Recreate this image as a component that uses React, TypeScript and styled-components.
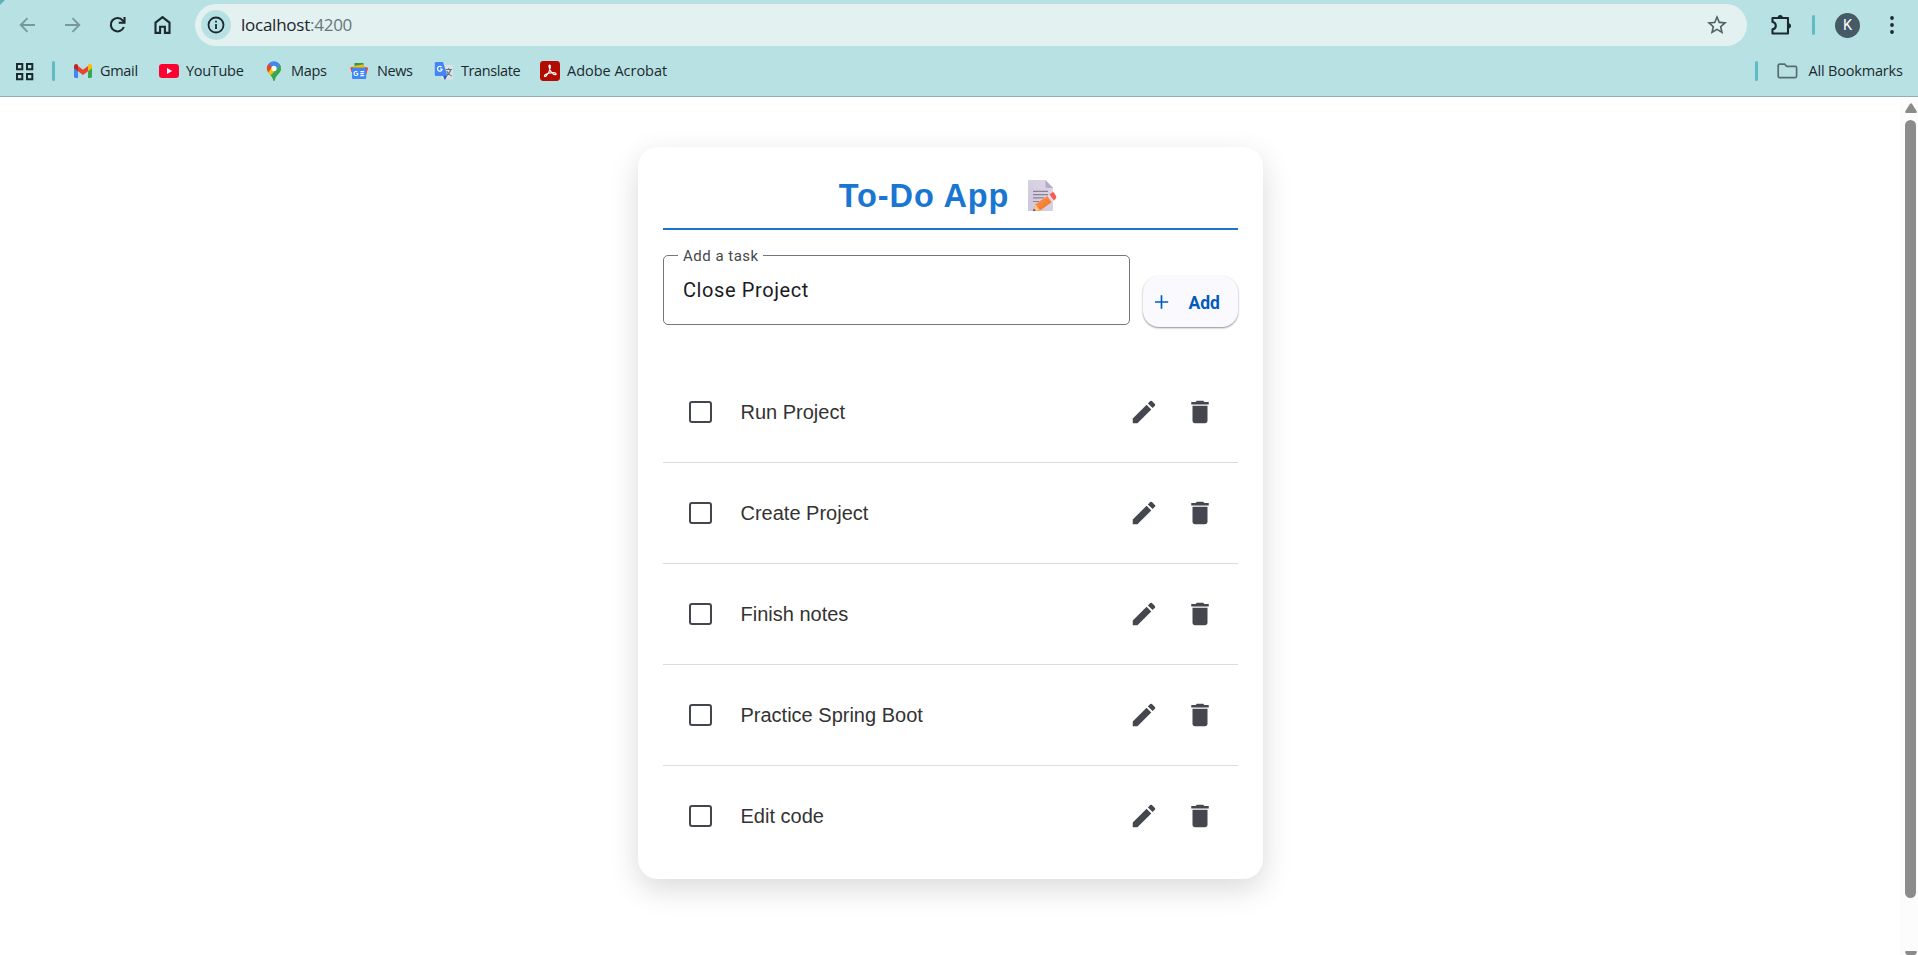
import React from 'react';
import styled, { createGlobalStyle } from 'styled-components';

const GlobalStyle = createGlobalStyle`
  * { box-sizing: border-box; }
  html, body { margin: 0; height: 100%; overflow: hidden; background: #fff; }
  #root { height: 100vh; }
  button, input { font: inherit; border: 0; padding: 0; margin: 0; background: none; outline: 0; }
  svg { display: block; flex: none; }
`;

const Window = styled.div`
  display: flex;
  flex-direction: column;
  height: 100vh;
`;

const Chrome = styled.header`
  flex: none;
  height: 97px;
  background: linear-gradient(135deg, #5fb0b6 3px, #b8e1e4 4px);
  border-bottom: 1px solid #92aeb0;
  font-family: 'Open Sans', 'Noto Sans', sans-serif;
  color: #1b2a2e;
`;

const Toolbar = styled.div`
  display: flex;
  align-items: center;
  height: 50px;
  padding: 0 24px 0 15px;
`;

const NavButton = styled.button<{ $dim?: boolean }>`
  display: flex;
  align-items: center;
  justify-content: center;
  width: 25px;
  height: 25px;
  margin-right: 20px;
  color: ${(p) => (p.$dim ? '#77989c' : '#1b2a2e')};
`;

const AddressBar = styled.div`
  display: flex;
  align-items: center;
  flex: none;
  width: 1552px;
  height: 42px;
  padding: 0 20px 0 6px;
  border-radius: 21px;
  background: #e4f1f1;
`;

const SiteInfo = styled.div`
  display: flex;
  align-items: center;
  justify-content: center;
  width: 30px;
  height: 30px;
  border-radius: 50%;
  background: #b8e1e4;
`;

const Url = styled.div`
  flex: 1;
  margin-left: 10px;
  font-size: 17px;
  line-height: 24px;
  letter-spacing: -0.25px;
  color: #1d2629;
  span { color: #65777b; }
`;

const ToolbarEnd = styled.div`
  display: flex;
  align-items: center;
  flex: 1;
  padding-left: 23px;
`;

const Bar = styled.i<{ $h: number; $ml?: number; $mr?: number }>`
  flex: none;
  width: 3px;
  height: ${(p) => p.$h}px;
  margin-left: ${(p) => p.$ml ?? 0}px;
  margin-right: ${(p) => p.$mr ?? 0}px;
  border-radius: 2px;
  background: #5fbcc3;
`;

const Avatar = styled.div`
  display: flex;
  align-items: center;
  justify-content: center;
  flex: none;
  width: 25px;
  height: 25px;
  border-radius: 50%;
  background: #455a64;
  color: #fff;
  font: 400 14.5px Roboto, sans-serif;
`;

const Bookmarks = styled.nav`
  display: flex;
  align-items: center;
  height: 42px;
  padding-left: 15px;
`;

const Bookmark = styled.a<{ $w: number; $track?: number }>`
  display: flex;
  align-items: center;
  gap: 7px;
  width: ${(p) => p.$w}px;
  font-size: 14.5px;
  line-height: 20px;
  letter-spacing: ${(p) => p.$track ?? -0.3}px;
  white-space: nowrap;
`;

const Spacer = styled.div`
  flex: 1;
`;

const Viewport = styled.div`
  display: flex;
  flex: 1;
  min-height: 0;
`;

const Page = styled.main`
  flex: 1;
  padding-top: 50px;
`;

const Card = styled.section`
  width: 625px;
  height: 732px;
  margin: 0 auto;
  padding: 25px;
  border-radius: 20px;
  background: #fff;
  box-shadow: 0 10px 30px rgba(0, 0, 0, 0.15);
`;

const Title = styled.h1`
  display: flex;
  align-items: center;
  justify-content: center;
  height: 58px;
  margin: 0;
  padding: 0 3px 9px 0;
  border-bottom: 2px solid #1f74c9;
  font: 700 32.5px/38px 'Liberation Sans', Arial, sans-serif;
  letter-spacing: 0.9px;
  color: #1976d2;
  svg { margin-left: 19px; }
`;

const Form = styled.div`
  display: flex;
  gap: 13px;
  margin-top: 25px;
`;

const Field = styled.fieldset`
  width: 467px;
  height: 78px;
  margin: -8px 0 0;
  padding: 0 19px;
  border: 1px solid #74777f;
  border-radius: 5px;
  font-family: Roboto, sans-serif;
`;

const FieldLabel = styled.legend`
  height: 17px;
  margin-left: -5px;
  padding: 0 4.5px 0 5.5px;
  font-size: 15px;
  line-height: 19px;
  letter-spacing: 0.5px;
  color: #44474e;
`;

const FieldInput = styled.input`
  display: block;
  width: 100%;
  height: 30px;
  margin-top: 11px;
  padding-left: 0.5px;
  font-size: 20px;
  letter-spacing: 0.6px;
  color: #1a1b1f;
`;

const AddButton = styled.button`
  display: flex;
  align-items: center;
  width: 95px;
  height: 51px;
  margin-top: 21px;
  padding-left: 12px;
  border-radius: 16px;
  background: #faf9fd;
  box-shadow: 0 1px 2px rgba(0, 0, 0, 0.45);
  color: #005cbb;
  font: 700 17.5px Roboto, sans-serif;
  span { margin: 2px 0 0 20px; }
`;

const List = styled.ul`
  margin: 35px 0 0;
  padding: 0;
  list-style: none;
`;

const Row = styled.li`
  display: flex;
  align-items: center;
  height: 101px;
  padding: 0 23px 0 26px;
  border-bottom: 1px solid #dcdcdc;
  color: #44474e;
  &:last-child { border-bottom-color: transparent; }
`;

const Checkbox = styled.span`
  width: 23px;
  height: 22px;
  margin-right: 29px;
  border: 2px solid #44464d;
  border-radius: 3px;
`;

const TaskName = styled.span`
  flex: 1;
  font: 20px/28px 'Liberation Sans', Arial, sans-serif;
  color: #333;
`;

const Actions = styled.div`
  display: flex;
  gap: 26px;
`;

const ScrollTrack = styled.div`
  display: flex;
  flex-direction: column;
  align-items: center;
  width: 18px;
  padding: 6px 0 0 3px;
  background: #fcfcfc;
  overflow: hidden;
`;

const ScrollThumb = styled.div`
  flex: none;
  width: 11px;
  height: 778px;
  margin: 7px 0 53px;
  border-radius: 6px;
  background: #8b8b8b;
`;

const ArrowLeft = ({ flip }: { flip?: boolean }) => (
  <svg width="17" height="16" viewBox="0 0 17 16" fill="none" stroke="currentColor" strokeWidth="1.9">
    <path d={flip ? 'M1 8H15M8.5 1.2L15.3 8L8.5 14.8' : 'M16 8H2M8.5 1.2L1.7 8L8.5 14.8'} />
  </svg>
);

const Reload = () => (
  <svg width="18" height="18" viewBox="0.5 0 18 18" fill="none" stroke="currentColor" strokeWidth="2.1">
    <path d="M15.3 11A6.7 6.7 0 1 1 14.3 4.6L15.8 6.5" />
    <path d="M16 1V6.7H10.2" />
  </svg>
);

const Home = () => (
  <svg width="18" height="20" viewBox="0.5 0 18 20" fill="none" stroke="currentColor" strokeWidth="2.1">
    <path d="M2 7.6L9 2.2L16 7.6V17.9H11.4V11.8H6.6V17.9H2Z" />
  </svg>
);

const Info = () => (
  <svg width="18" height="18" viewBox="0 0 18 18" fill="none" stroke="#1b2a2e" strokeWidth="1.8">
    <circle cx="9" cy="9" r="7.5" />
    <path d="M9 8V13M9 4.8V6.6" />
  </svg>
);

const Star = () => (
  <svg width="20" height="20" viewBox="2 2 20 20" fill="#4f6164">
    <path d="M22 9.24l-7.19-.62L12 2 9.19 8.63 2 9.24l5.46 4.73L5.82 21 12 17.27 18.18 21l-1.63-7.03L22 9.24zM12 15.4l-3.76 2.27 1-4.28-3.32-2.88 4.38-.38L12 6.1l1.71 4.04 4.38.38-3.32 2.88 1 4.28L12 15.4z" />
  </svg>
);

const Extension = () => (
  <svg width="22" height="22" viewBox="0 0 22 22" fill="none" stroke="#1b2a2e" strokeWidth="2.1" strokeLinejoin="round">
    <path d="M2.5 4H18V19.5H2.5V15.4C4.7 15 5.8 13.6 5.8 11.7S4.7 8.3 2.5 8Z" />
    <path d="M7.6 3.6a2.6 2.6 0 0 1 5.2 0ZM18.4 9.2a2.6 2.6 0 0 1 0 5.2Z" fill="#1b2a2e" stroke="none" />
  </svg>
);

const Dots = () => (
  <svg width="4" height="18" viewBox="0 0 4 18" fill="#1b2a2e">
    <circle cx="2" cy="2" r="1.9" />
    <circle cx="2" cy="9" r="1.9" />
    <circle cx="2" cy="16" r="1.9" />
  </svg>
);

const Apps = () => (
  <svg width="19" height="19" viewBox="0 0 19 19" fill="none" stroke="#1b2a2e" strokeWidth="2">
    <path d="M2 2H7.3V7.3H2ZM12 2H17.3V7.3H12ZM2 12H7.3V17.3H2ZM12 12H17.3V17.3H12Z" />
  </svg>
);

const Gmail = () => (
  <svg width="20" height="16" viewBox="0 0 20 16">
    <path d="M1 3V13.6Q1 15 2.4 15H5V6Z" fill="#4285f4" />
    <path d="M15 6V15H17.6Q19 15 19 13.6V3Z" fill="#34a853" />
    <path d="M5 3V8.2L10 12L15 8.2V3L10 6.8Z" fill="#ea4335" />
    <path d="M1 3.4Q1 1 3 1Q3.8 1 5 2.1V8.2L1 5.2Z" fill="#c5221f" />
    <path d="M19 3.4Q19 1 17 1Q16.2 1 15 2.1V8.2L19 5.2Z" fill="#fbbc04" />
  </svg>
);

const YouTube = () => (
  <svg width="20" height="14" viewBox="0 0 20 14">
    <rect width="20" height="14" rx="3.2" fill="#ff0033" />
    <path d="M8 4L13.2 7L8 10Z" fill="#fff" />
  </svg>
);

const Maps = () => (
  <svg width="20" height="20" viewBox="0 0 20 20">
    <path d="M3 7.5A7 7 0 0 1 17 7.5C17 12.5 11.5 13.5 10.7 19.2Q10 20.4 9.3 19.2C8.7 14 3 12.3 3 7.5Z" fill="#34a853" />
    <path d="M4.3 11.5L12.4 2.2L16.6 6C17 7.2 16.9 8 16.6 8.6L10 10.2L6.6 14.3Z" fill="#fbbc04" />
    <path d="M4.7 2.8L8.5 6L4.2 11.3A7 7 0 0 1 4.7 2.8Z" fill="#ea4335" />
    <path d="M4.7 2.8A7 7 0 0 1 16.2 4.2L11.7 9L8.4 6Z" fill="#4285f4" />
    <path d="M16.2 4.2Q18.2 9 14.7 12.5Q11.5 15.5 10.7 19.2Q10 20.4 9.3 19.2Q8.7 16.4 6.6 14.3Z" fill="#34a853" />
    <path d="M4.2 11.3L8 7L12 9L6.6 14.3Z" fill="#fbbc04" />
    <circle cx="10" cy="7.4" r="2.6" fill="#fff" />
  </svg>
);

const News = () => (
  <svg width="20" height="20" viewBox="0 0 20 20">
    <path d="M4.5 2H13.5V9H4.5Z" fill="#2b9a4b" />
    <path d="M.3 6.6L4 5.6V11H1.5Z" fill="#ea4335" />
    <path d="M13.5 5.4L18.2 6.8L16 14.5H13.5Z" fill="#ea4335" />
    <path d="M2.6 5.2L12.6 3.4L15.2 6.5V9H3Z" fill="#fbbc04" />
    <rect x="2" y="6.6" width="14.2" height="11.4" rx="1" fill="#4285f4" />
    <path d="M8.1 12.5H6.4M8 12.5A2 2 0 1 1 7.3 11M10.4 10.6H14.2M10.4 12.6H13.8M10.4 14.6H14.2" fill="none" stroke="#fff" strokeWidth="1.1" />
  </svg>
);

const Translate = () => (
  <svg width="20" height="20" viewBox="0 0 20 20">
    <rect x="7" y="4" width="12" height="14.5" rx="1.2" fill="#dde1e4" />
    <path d="M11.5 8.5H18M14.7 7V8.5M16.8 8.5Q15.5 13 11.8 15M12.7 10Q14 13.5 17.7 15" fill="none" stroke="#67777c" strokeWidth="1.1" />
    <path d="M9 14.5H13.3L10.8 19.2Z" fill="#2a56c6" />
    <path d="M2 1H9L13.5 15H2Q.8 15 .8 13.8V2.2Q.8 1 2 1Z" fill="#4285f4" />
    <path d="M8.4 8H6M8.3 8A2.4 2.4 0 1 1 7.5 6" fill="none" stroke="#fff" strokeWidth="1.2" />
  </svg>
);

const Acrobat = () => (
  <svg width="20" height="20" viewBox="0 0 20 20">
    <rect width="20" height="20" rx="3.4" fill="#b30b00" />
    <path d="M9.6 4C8.6 4 9 7 10.2 9.2C11.5 11.8 13.8 13.7 15.2 13.7C16.9 13.7 16.2 11.7 13 11.7C10.1 11.7 6.9 12.6 5.2 13.8C3.6 15 4.9 16.4 6.3 14.9C8 13 10 9 10.3 6.3C10.4 4.6 10.1 4 9.6 4Z" fill="none" stroke="#fff" strokeWidth="1.2" />
  </svg>
);

const Folder = () => (
  <svg width="21" height="16" viewBox="0 0 21 16" fill="none" stroke="#596d70" strokeWidth="1.7">
    <path d="M1.2 2.6Q1.2 1.2 2.6 1.2H7.6L9.8 3.4H18.3Q19.6 3.4 19.6 4.8V13.1Q19.6 14.6 18.2 14.6H2.6Q1.2 14.6 1.2 13.1Z" />
  </svg>
);

const Memo = () => (
  <svg width="30" height="32" viewBox="0 0 30 32">
    <defs>
      <linearGradient id="sheet" x1="1" y1="0" x2="0" y2="1">
        <stop stopColor="#e0d7e8" />
        <stop offset="1" stopColor="#cdc6dc" />
      </linearGradient>
      <linearGradient id="pencil" x1="0" y1="0" x2="1" y2="1">
        <stop stopColor="#ffa04b" />
        <stop offset="1" stopColor="#ee6b24" />
      </linearGradient>
    </defs>
    <path d="M0 1Q0 0 1 0H17.5L25 8V30Q25 31 24 31H1Q0 31 0 30Z" fill="url(#sheet)" />
    <path d="M17.5 0L25 8H18.5Q17.5 8 17.5 7Z" fill="#b8abc5" />
    <path d="M5 11.3H20M5 14.6H20M5 17.9H16M5 21.5H11" stroke="#8c8193" strokeWidth="1.2" />
    <path d="M5.3 30.7L7.4 24.2L20 15.4L24.5 21.6L12 30.6Z" fill="url(#pencil)" />
    <path d="M5.3 30.7L7.4 24.2L12 30.6Z" fill="#fbc28b" />
    <path d="M5.1 31L5.9 28.6L7.6 30.7Z" fill="#4e3841" />
    <path d="M19.3 16L21.8 14.2L26.2 20.4L23.7 22.2Z" fill="#e4d8ed" />
    <path d="M21.5 14.4L24.2 12.4Q25.2 11.7 26 12.7L28.1 16Q28.7 17.5 27.8 18.5L25.9 20.6Z" fill="#f75c50" />
  </svg>
);

const Plus = () => (
  <svg width="14" height="14" viewBox="0 0 14 14" stroke="currentColor" strokeWidth="1.7">
    <path d="M6.5 .3V13.7M0 7H13.2" />
  </svg>
);

const Pencil = () => (
  <svg width="30" height="30" viewBox="0 0 24 24" fill="currentColor">
    <path d="M3 17.25V21h3.75L17.81 9.94l-3.75-3.75L3 17.25zM20.71 7.04a.996.996 0 0 0 0-1.41l-2.34-2.34a.996.996 0 0 0-1.41 0l-1.83 1.83 3.75 3.75 1.83-1.83z" />
  </svg>
);

const Trash = () => (
  <svg width="30" height="30" viewBox="0 0 24 24" fill="currentColor">
    <path d="M6 19c0 1.1.9 2 2 2h8c1.1 0 2-.9 2-2V7H6v12zM19 4h-3.5l-1-1h-5l-1 1H5v2h14V4z" />
  </svg>
);

const bookmarks = [
  { name: 'Gmail', icon: <Gmail />, width: 86 },
  { name: 'YouTube', icon: <YouTube />, width: 105 },
  { name: 'Maps', icon: <Maps />, width: 86 },
  { name: 'News', icon: <News />, width: 84, track: -0.4 },
  { name: 'Translate', icon: <Translate />, width: 106, track: -0.4 },
  { name: 'Adobe Acrobat', icon: <Acrobat />, width: 140, track: -0.02 },
];

const tasks = ['Run Project', 'Create Project', 'Finish notes', 'Practice Spring Boot', 'Edit code'];

export default function App() {
  return (
    <Window>
      <GlobalStyle />
      <Chrome>
        <Toolbar>
          <NavButton $dim><ArrowLeft /></NavButton>
          <NavButton $dim><ArrowLeft flip /></NavButton>
          <NavButton><Reload /></NavButton>
          <NavButton><Home /></NavButton>
          <AddressBar>
            <SiteInfo><Info /></SiteInfo>
            <Url>localhost<span>:4200</span></Url>
            <Star />
          </AddressBar>
          <ToolbarEnd>
            <Extension />
            <Bar $h={20} $ml={20} $mr={20} />
            <Avatar>K</Avatar>
            <Spacer />
            <Dots />
          </ToolbarEnd>
        </Toolbar>
        <Bookmarks>
          <Apps />
          <Bar $h={20} $ml={18} $mr={18} />
          {bookmarks.map((b) => (
            <Bookmark key={b.name} $w={b.width} $track={b.track}>{b.icon}{b.name}</Bookmark>
          ))}
          <Spacer />
          <Bar $h={20} $mr={19} />
          <Bookmark $w={141} $track={-0.2}><Folder />&nbsp;All Bookmarks</Bookmark>
        </Bookmarks>
      </Chrome>
      <Viewport>
        <Page>
          <Card>
            <Title>To-Do App<Memo /></Title>
            <Form>
              <Field>
                <FieldLabel>Add a task</FieldLabel>
                <FieldInput defaultValue="Close Project" />
              </Field>
              <AddButton><Plus /><span>Add</span></AddButton>
            </Form>
            <List>
              {tasks.map((task) => (
                <Row key={task}>
                  <Checkbox />
                  <TaskName>{task}</TaskName>
                  <Actions><Pencil /><Trash /></Actions>
                </Row>
              ))}
            </List>
          </Card>
        </Page>
        <ScrollTrack>
          <svg width="12" height="10" viewBox="0 0 12 10" fill="#8b8b8b">
            <path d="M5 .8Q6 -.4 7 .8L11.7 8.3Q12.3 10 10.7 10H1.3Q-.3 10 .3 8.3Z" />
          </svg>
          <ScrollThumb />
          <svg width="12" height="10" viewBox="0 0 12 10" fill="#8b8b8b">
            <path d="M5 9.2Q6 10.4 7 9.2L11.7 1.7Q12.3 0 10.7 0H1.3Q-.3 0 .3 1.7Z" />
          </svg>
        </ScrollTrack>
      </Viewport>
    </Window>
  );
}
